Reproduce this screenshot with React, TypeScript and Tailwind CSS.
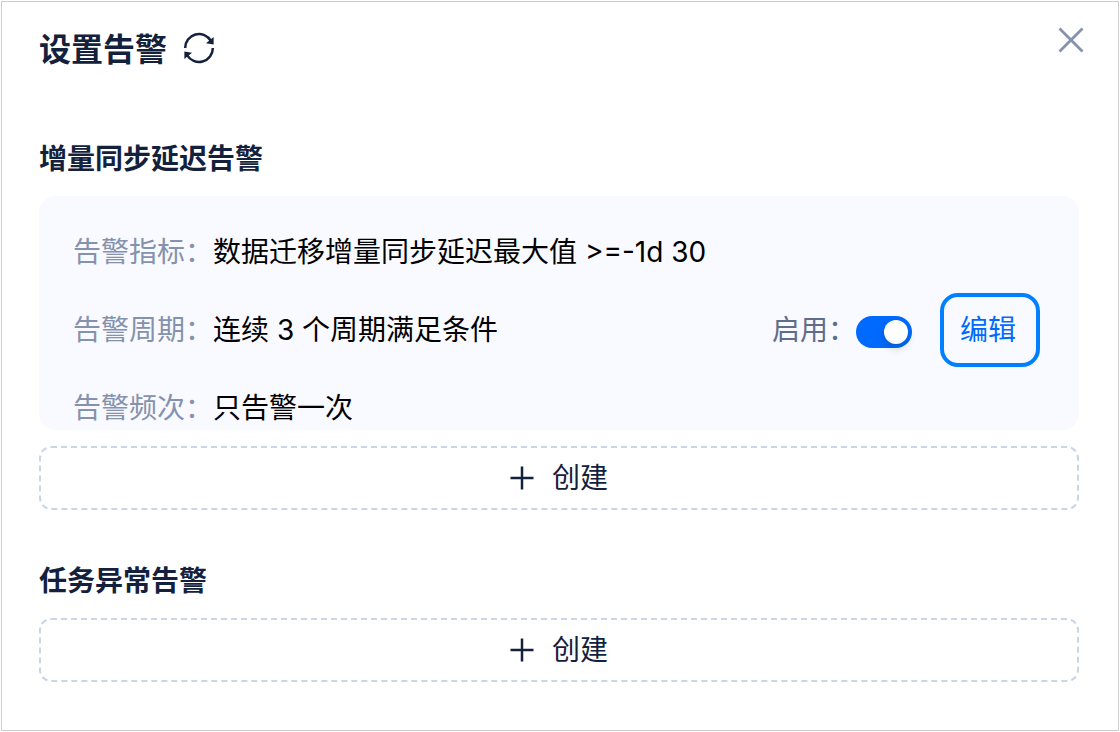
import { useState } from "react";

const rules = [
  { label: "告警指标：", value: "数据迁移增量同步延迟最大值 >=-1d 30" },
  { label: "告警周期：", value: "连续 3 个周期满足条件" },
  { label: "告警频次：", value: "只告警一次" },
];

function RefreshIcon() {
  return (
    <svg width="32" height="32" viewBox="0 0 32 32" fill="none" aria-hidden="true">
      <path d="M2.2 16A13.8 13.8 0 0 1 28 9" stroke="currentColor" strokeWidth="2.5" />
      <path d="M29.8 16A13.8 13.8 0 0 1 4 23" stroke="currentColor" strokeWidth="2.5" />
      <path d="M30.6 5V12.4L23 11.2Z" fill="currentColor" />
      <path d="M1.4 27V19.6L9 20.8Z" fill="currentColor" />
    </svg>
  );
}

function CloseIcon() {
  return (
    <svg width="26" height="26" viewBox="0 0 26 26" fill="none" aria-hidden="true">
      <path d="M1.5 1.5L24.5 24.5M24.5 1.5L1.5 24.5" stroke="currentColor" strokeWidth="2.8" />
    </svg>
  );
}

function CreateButton() {
  return (
    <button
      type="button"
      className="flex h-16 w-full items-center justify-center gap-[18px] rounded-xl border-2 border-dashed border-[#cad5e5] text-[28px] leading-10"
    >
      <svg width="24" height="24" viewBox="0 0 24 24" fill="none" aria-hidden="true">
        <path d="M0.5 12H23.5M12 0.5V23.5" stroke="currentColor" strokeWidth="2.5" />
      </svg>
      创建
    </button>
  );
}

export default function App() {
  const [enabled, setEnabled] = useState(true);

  return (
    <div className="min-h-screen bg-white p-px font-['Inter','Noto_Sans_CJK_SC',sans-serif] text-[#14213d]">
      <main className="min-h-[calc(100vh-2px)] border border-[#cccccc] pt-6 pr-[39px] pb-12 pl-[37px]">
        <header className="-mr-[5px] flex items-start justify-between">
          <div className="flex items-start gap-4">
            <h1 className="text-[32px] leading-12 font-bold">设置告警</h1>
            <button type="button" aria-label="刷新" className="py-1.5">
              <RefreshIcon />
            </button>
          </div>
          <button type="button" aria-label="关闭" className="py-px text-[#8592ad]">
            <CloseIcon />
          </button>
        </header>

        <section className="mt-[63px]">
          <h2 className="text-[28px] leading-11 font-bold">增量同步延迟告警</h2>
          <div className="mt-[15px] flex items-center justify-between rounded-2xl bg-[#f9faff] pt-[34px] pr-[39px] pl-[34px] text-[28px] leading-11">
            <dl className="flex flex-col gap-[34px]">
              {rules.map((rule) => (
                <div key={rule.label} className="flex">
                  <dt className="text-[#8592ad]">{rule.label}</dt>
                  <dd className="text-black">{rule.value}</dd>
                </div>
              ))}
            </dl>
            <div className="flex items-center">
              <label htmlFor="alert-enabled" className="text-[#5f6c8c]">
                启用：
              </label>
              <input
                id="alert-enabled"
                type="checkbox"
                role="switch"
                checked={enabled}
                onChange={(event) => setEnabled(event.target.checked)}
                className="mt-1 h-8 w-14 cursor-pointer appearance-none rounded-full bg-[#b8c2d6] p-1 before:block before:size-6 before:rounded-full before:bg-white before:shadow-[0_4px_8px_rgba(0,35,11,0.2)] checked:bg-[#006aff] checked:before:translate-x-6"
              />
              <button
                type="button"
                className="ml-7 rounded-[18px] border-4 border-[#0080ff] py-[11px] pr-5 pl-4 text-[#006aff]"
              >
                编辑
              </button>
            </div>
          </div>
          <div className="mt-4">
            <CreateButton />
          </div>
        </section>

        <section className="mt-[49px]">
          <h2 className="text-[28px] leading-11 font-bold">任务异常告警</h2>
          <div className="mt-[15px]">
            <CreateButton />
          </div>
        </section>
      </main>
    </div>
  );
}
